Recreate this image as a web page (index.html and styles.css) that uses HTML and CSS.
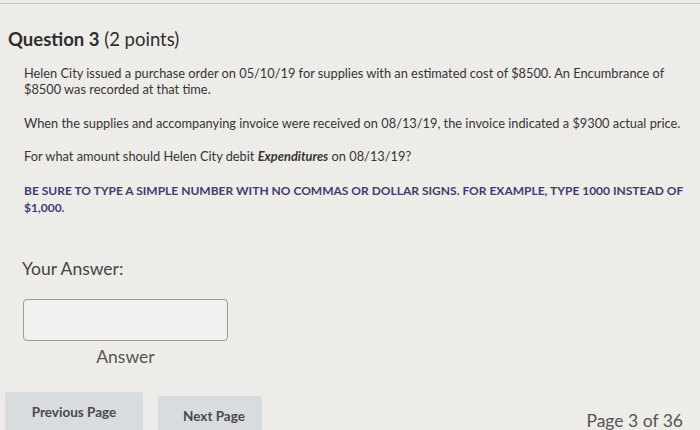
FILE: index.html
```html
<!DOCTYPE html>
<html>
<head>
<meta charset="utf-8">
<link rel="stylesheet" href="styles.css">
</head>
<body>
<div class="page">
  <div class="topline"></div>
  <h1 class="qtitle"><b>Question 3</b> (2 points)</h1>
  <div class="qbody">
    <p class="p1">Helen City issued a purchase order on 05/10/19 for supplies with an estimated cost of $8500. An Encumbrance of $8500 was recorded at that time.</p>
    <p class="p2">When the supplies and accompanying invoice were received on 08/13/19, the invoice indicated a $9300 actual price.</p>
    <p class="p3">For what amount should Helen City debit <b><i>Expenditures</i></b> on 08/13/19?</p>
    <p class="p4">BE SURE TO TYPE A SIMPLE NUMBER WITH NO COMMAS OR DOLLAR SIGNS. FOR EXAMPLE, TYPE 1000 INSTEAD OF $1,000.</p>
  </div>
  <div class="answer">
    <div class="alabel">Your Answer:</div>
    <div class="field">
      <div class="inputbox"></div>
      <div class="fieldlabel">Answer</div>
    </div>
  </div>
  <div class="footer">
    <div class="btn prev">Previous Page</div>
    <div class="btn next">Next Page</div>
    <div class="pageinfo">Page 3 of 36</div>
  </div>
</div>
</body>
</html>
```

FILE: styles.css
```css
html, body {
  margin: 0;
  padding: 0;
}
body {
  background: #eeece9;
  font-family: Lato, "Open Sans", sans-serif;
  color: #333;
  width: 700px;
  height: 430px;
  overflow: hidden;
}
.page {
  display: flex;
  flex-direction: column;
  height: 430px;
}
.topline {
  margin-top: 3px;
  height: 0;
  border-top: 1px solid #c9c8c6;
}
.qtitle {
  margin: 24px 0 0 8px;
  font-size: 18.5px;
  line-height: 22px;
  font-weight: normal;
  color: #2e2e2e;
}
.qtitle b {
  font-weight: bold;
}
.qbody {
  padding-left: 24px;
  width: 664px;
  font-size: 12.8px;
  line-height: 16px;
  color: #353535;
}
.qbody p {
  margin: 0;
}
.p1 { margin-top: 15px !important; }
.p2 { margin-top: 18px !important; }
.p3 { margin-top: 17px !important; }
.p4 {
  margin-top: 18px !important;
  font-weight: bold;
  font-size: 12px;
  color: #3f3c70;
  line-height: 17px;
}
.answer {
  margin-top: 43px;
  padding-left: 22px;
}
.alabel {
  font-size: 17.5px;
  line-height: 20px;
  color: #444;
}
.field {
  margin-top: 20px;
  margin-left: 1px;
  width: 205px;
  display: flex;
  flex-direction: column;
  align-items: center;
}
.inputbox {
  width: 203px;
  height: 40px;
  border: 1px solid #9a9a9a;
  border-radius: 4px;
  background: #f1f0ee;
}
.fieldlabel {
  margin-top: 6px;
  font-size: 17.5px;
  line-height: 20px;
  color: #555;
}
.footer {
  margin-top: auto;
  display: flex;
  align-items: flex-start;
  padding-left: 5px;
  height: 38px;
}
.btn {
  background: #d9dcdf;
  border-radius: 3px 3px 0 0;
  font-size: 13.5px;
  font-weight: bold;
  color: #4a4a4a;
  display: flex;
  align-items: center;
  justify-content: center;
}
.prev {
  width: 138px;
  height: 40px;
}
.next {
  margin-left: 15px;
  margin-top: 4px;
  width: 104px;
  height: 40px;
  padding-left: 8px;
  box-sizing: border-box;
}
.pageinfo {
  margin-left: auto;
  margin-right: 17px;
  margin-top: 19px;
  font-size: 17.5px;
  line-height: 20px;
  color: #555;
}
```
